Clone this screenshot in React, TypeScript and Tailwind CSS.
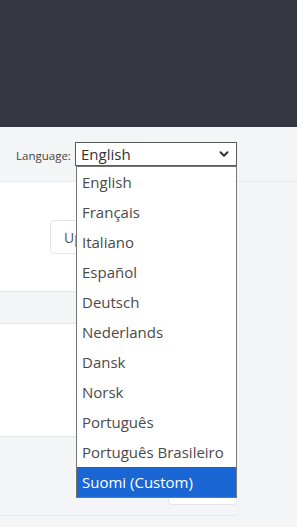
import { ChevronDown } from "lucide-react";

const LANGUAGES = [
  "English",
  "Français",
  "Italiano",
  "Español",
  "Deutsch",
  "Nederlands",
  "Dansk",
  "Norsk",
  "Português",
  "Português Brasileiro",
  "Suomi (Custom)",
];

const FONT = { fontFamily: '"Open Sans", "Noto Sans", sans-serif' };

function LanguageSelect() {
  return (
    <div className="relative">
      <div className="w-[162px] h-[24px] border border-[#5a5a5a] bg-white flex items-center justify-between pl-[5px] pr-[5px] text-[15px] text-[#333]">
        <span>English</span>
        <ChevronDown className="h-[14px] w-[14px] text-[#333]" strokeWidth={3.2} />
      </div>
      {/* open list sits over the page */}
      <ul className="absolute left-[1px] top-[24px] w-[161px] border border-[#767676] bg-white z-10">
        {LANGUAGES.map((l) => (
          <li
            key={l}
            className={`h-[30px] flex items-center pl-[5px] text-[15px] whitespace-nowrap ${
              l === "Suomi (Custom)" ? "bg-[#1a66d4] text-white" : "text-[#4a4a4a]"
            }`}
          >
            {l}
          </li>
        ))}
      </ul>
    </div>
  );
}

export default function App() {
  return (
    <div className="w-[297px] h-[527px] flex flex-col overflow-hidden" style={FONT}>
      <div className="h-[127px] bg-[#353841] shrink-0" />
      <div className="flex-1 bg-[#f4f5f7]">
        {/* toolbar */}
        <div className="h-[55px] flex items-start pt-[15px] pl-[16px] border-b border-[#e6eaed]">
          <span className="w-[59px] text-[11.5px] text-[#444] mt-[5px] whitespace-nowrap">Language:</span>
          <LanguageSelect />
        </div>

        <div className="w-[237px]">
          <div className="h-[110px] bg-white border-b border-[#e4e8eb] pl-[50px] pt-[38px]">
            <div className="w-[120px] h-[34px] border border-[#e3e5e8] rounded-[4px] flex items-center pl-[13px] text-[14px] text-[#555]">
              Update
            </div>
          </div>
          <div className="h-[31px]" />
          <div className="h-[114px] bg-white border-y border-[#e4e8eb]" />
          <div className="h-[36px]" />
          <div className="flex justify-end">
            <div className="w-[69px] h-[32px] border border-[#e3e5e8] rounded-[4px] bg-white" />
          </div>
          <div className="mt-[10px] border-b border-[#e4e8eb]" />
        </div>
      </div>
    </div>
  );
}
